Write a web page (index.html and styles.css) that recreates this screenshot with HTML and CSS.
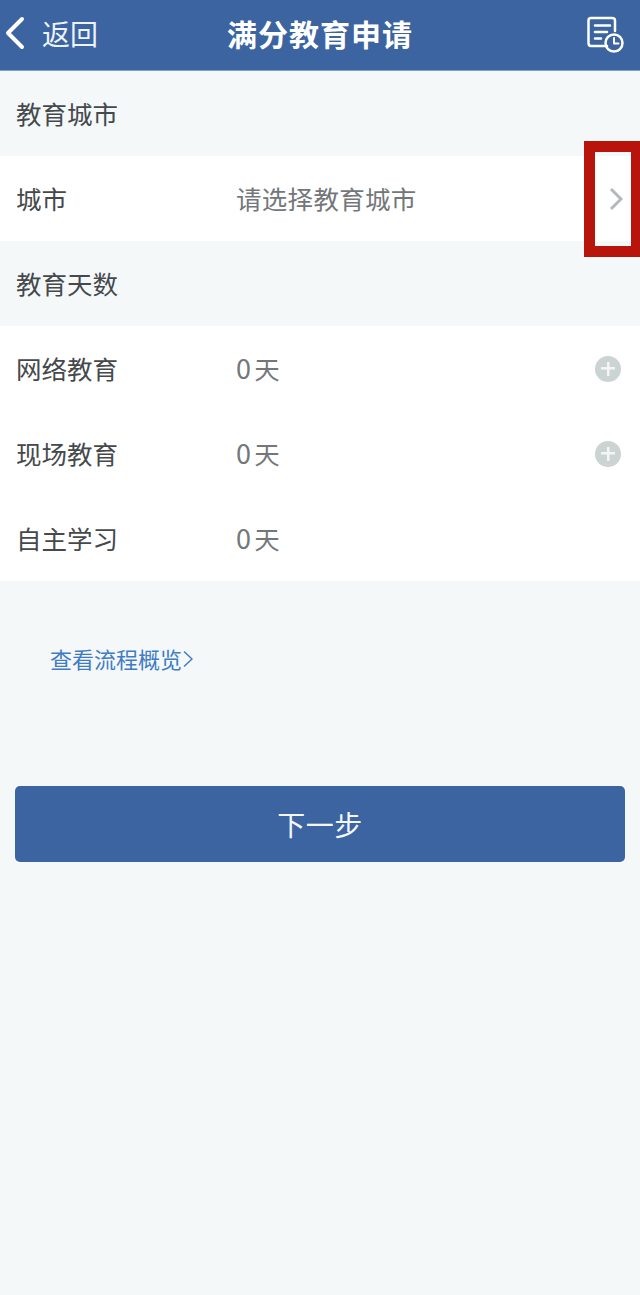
FILE: index.html
```html
<!DOCTYPE html>
<html lang="zh-CN">
  <head>
    <meta charset="UTF-8" />
    <meta name="viewport" content="width=device-width, initial-scale=1.0" />
    <title>满分教育申请</title>
    <link rel="stylesheet" href="styles.css">
  </head>
  <body>
    <header class="topbar">
      <div class="back">
        <svg class="back-icon" width="22" height="36" viewBox="0 0 22 36"><path d="M18 4 L4 18 L18 32" /></svg>
        <span>返回</span>
      </div>
      <h1 class="title">满分教育申请</h1>
      <svg class="record-icon" width="38" height="38" viewBox="0 0 38 38">
        <path d="M20 30 H4 Q1.500 30 1.500 27 V4.500 Q1.500 2 4 2 H25 Q28 2 28 4.500 V15" />
        <path d="M8 9.500 H23 M8 16 H20 M8 22.500 H14" />
        <circle cx="27" cy="27" r="8.500" />
        <path class="hand" d="M27 22 V27.500 H31.500" />
      </svg>
    </header>

    <div class="section-title">教育城市</div>
    <div class="group">
      <div class="row">
        <span class="label">城市</span>
        <span class="value">请选择教育城市</span>
        <svg class="chevron" width="14" height="24" viewBox="0 0 14 24"><path d="M2 2 L12 12 L2 22" /></svg>
      </div>
    </div>

    <div class="section-title">教育天数</div>
    <div class="group">
      <div class="row">
        <span class="label">网络教育</span>
        <span class="value"><span class="num">0</span>天</span>
        <span class="plus"></span>
      </div>
      <div class="row">
        <span class="label">现场教育</span>
        <span class="value"><span class="num">0</span>天</span>
        <span class="plus"></span>
      </div>
      <div class="row">
        <span class="label">自主学习</span>
        <span class="value"><span class="num">0</span>天</span>
      </div>
    </div>

    <a class="flow-link">查看流程概览<svg width="10" height="18" viewBox="0 0 10 18"><path d="M1 1.500 L9 9 L1 16.500" /></svg></a>

    <button class="next">下一步</button>

    <div class="highlight-box"></div>
  </body>
</html>
```

FILE: styles.css
```css
body {
  margin: 0;
  height: 1295px;
  overflow: hidden;
  position: relative;
  background: #f4f8f9;
  font-family: "Noto Sans CJK SC", "Noto Sans", sans-serif;
  color: #45494c;
}
.topbar {
  height: 66px;
  background: #3b64a1;
  border-bottom: 1px solid #7fa0c8;
  display: grid;
  grid-template-columns: 1fr auto 1fr;
  align-items: center;
  padding: 0 15px 4px 4px;
  color: #fff;
}
.back {
  display: flex;
  align-items: center;
  gap: 16px;
  font-size: 28px;
  color: #eef3f9;
}
.back-icon path {
  fill: none;
  stroke: #fff;
  stroke-width: 4;
  stroke-linecap: round;
  stroke-linejoin: round;
}
.title {
  margin: 0 0 0 11px;
  font-size: 30px;
  font-weight: 700;
  line-height: 1;
  letter-spacing: 1px;
}
.record-icon {
  display: block;
  justify-self: end;
  margin-top: 4px;
}
.record-icon path,
.record-icon circle {
  fill: none;
  stroke: #fff;
  stroke-width: 2.500;
  stroke-linecap: round;
  stroke-linejoin: round;
}
.record-icon .hand {
  stroke-width: 2;
}
.section-title {
  height: 83px;
  line-height: 83px;
  padding: 0 0 2px 16px;
  font-size: 25.500px;
}
.group {
  background: #fff;
}
.row {
  height: 83px;
  display: flex;
  align-items: center;
  padding: 0 18px 2px 16px;
  font-size: 25.500px;
}
.row .plus,
.row .chevron {
  margin-top: 2px;
}
.label {
  width: 220px;
  flex: none;
}
.value {
  flex: 1;
  color: #73777a;
  letter-spacing: 0.300px;
}
.num {
  margin-right: 3px;
  font-size: 27px;
}
.chevron {
  margin-right: -1px;
}
.chevron path {
  fill: none;
  stroke: #b4b8ba;
  stroke-width: 3;
}
.plus {
  width: 26px;
  height: 26px;
  border-radius: 50%;
  margin-right: 1px;
  background:
    linear-gradient(#f4f6f6, #f4f6f6) center / 14px 2.500px no-repeat,
    linear-gradient(#f4f6f6, #f4f6f6) center / 2.500px 14px no-repeat,
    #ccd3d3;
}
.flow-link {
  display: flex;
  align-items: center;
  gap: 1px;
  margin: 59px 0 0 50px;
  height: 36px;
  font-size: 22px;
  color: #3f7cc4;
}
.flow-link svg {
  margin-top: 2px;
}
.flow-link path {
  fill: none;
  stroke: #3f7cc4;
  stroke-width: 1.500;
}
.next {
  display: block;
  width: 610px;
  height: 76px;
  margin: 110px 0 0 15px;
  padding: 0;
  border: 0;
  border-radius: 5px;
  background: #3b64a1;
  color: #f4f7fb;
  font-family: inherit;
  font-size: 28px;
  letter-spacing: 0.500px;
}
.highlight-box {
  position: absolute;
  left: 584px;
  top: 141px;
  width: 36px;
  height: 94px;
  border: solid #b9140c;
  border-width: 11px 9px 11px 11px;
}
```
